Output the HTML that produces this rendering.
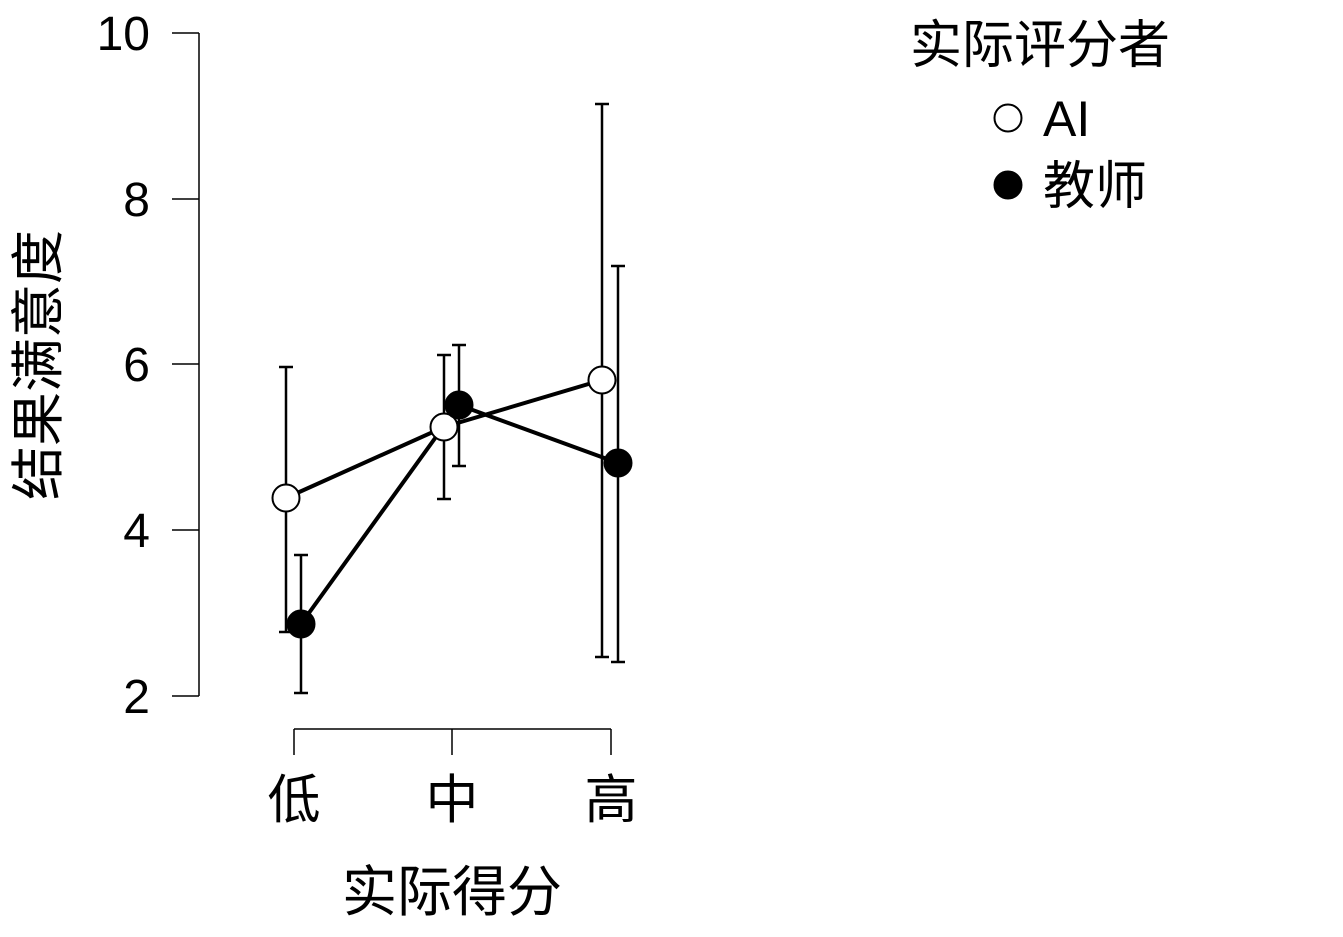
<!DOCTYPE html>
<html><head><meta charset="utf-8"><style>
html,body{margin:0;padding:0;background:#fff;}
svg{display:block;}
text{font-family:"Liberation Sans","Noto Sans CJK SC",sans-serif;fill:#000;}
</style></head><body>
<svg width="1343" height="937" viewBox="0 0 1343 937" xmlns="http://www.w3.org/2000/svg">
<g stroke="#000" stroke-width="1.5" fill="none">
<line x1="199" y1="33" x2="199" y2="696"/>
<line x1="172" y1="33" x2="199" y2="33"/>
<line x1="172" y1="199" x2="199" y2="199"/>
<line x1="172" y1="364" x2="199" y2="364"/>
<line x1="172" y1="530" x2="199" y2="530"/>
<line x1="172" y1="696" x2="199" y2="696"/>
<line x1="294" y1="729" x2="611" y2="729"/>
<line x1="294" y1="729" x2="294" y2="755"/>
<line x1="452" y1="729" x2="452" y2="755"/>
<line x1="611" y1="729" x2="611" y2="755"/>
</g>
<g font-size="48" text-anchor="end">
<text x="150" y="50">10</text>
<text x="150" y="216">8</text>
<text x="150" y="381">6</text>
<text x="150" y="547">4</text>
<text x="150" y="713">2</text>
</g>
<g font-size="53" text-anchor="middle">
<text x="294" y="818">低</text>
<text x="452" y="818">中</text>
<text x="611" y="818">高</text>
<text x="452" y="911" font-size="55">实际得分</text>
<text transform="translate(57,365) rotate(-90)" font-size="54">结果满意度</text>
</g>
<g stroke="#000" stroke-width="2.5" fill="none">
<path d="M286 367V632M279 367H293M279 632H293"/>
<path d="M444 355V499M437 355H451M437 499H451"/>
<path d="M602 104V657M595 104H609M595 657H609"/>
<path d="M301 555V693M294 555H308M294 693H308"/>
<path d="M459 345V466M452 345H466M452 466H466"/>
<path d="M618 266V662M611 266H625M611 662H625"/>
</g>
<g stroke="#000" stroke-width="4" fill="none">
<polyline points="286,498 444,427 602,380"/>
<polyline points="301,624 459,405 618,463"/>
</g>
<g stroke="#000" stroke-width="2">
<circle cx="286" cy="498" r="13.5" fill="#fff"/>
<circle cx="444" cy="427" r="13.5" fill="#fff"/>
<circle cx="602" cy="380" r="13.5" fill="#fff"/>
<circle cx="301" cy="624" r="13.5" fill="#000"/>
<circle cx="459" cy="405" r="13.5" fill="#000"/>
<circle cx="618" cy="463" r="13.5" fill="#000"/>
<circle cx="1008" cy="118" r="13.5" fill="#fff"/>
<circle cx="1008" cy="185" r="13.5" fill="#000"/>
</g>
<text x="1040" y="63" font-size="52" text-anchor="middle">实际评分者</text>
<text x="1043" y="136" font-size="50">AI</text>
<text x="1043" y="204" font-size="52">教师</text>
</svg>
</body></html>
